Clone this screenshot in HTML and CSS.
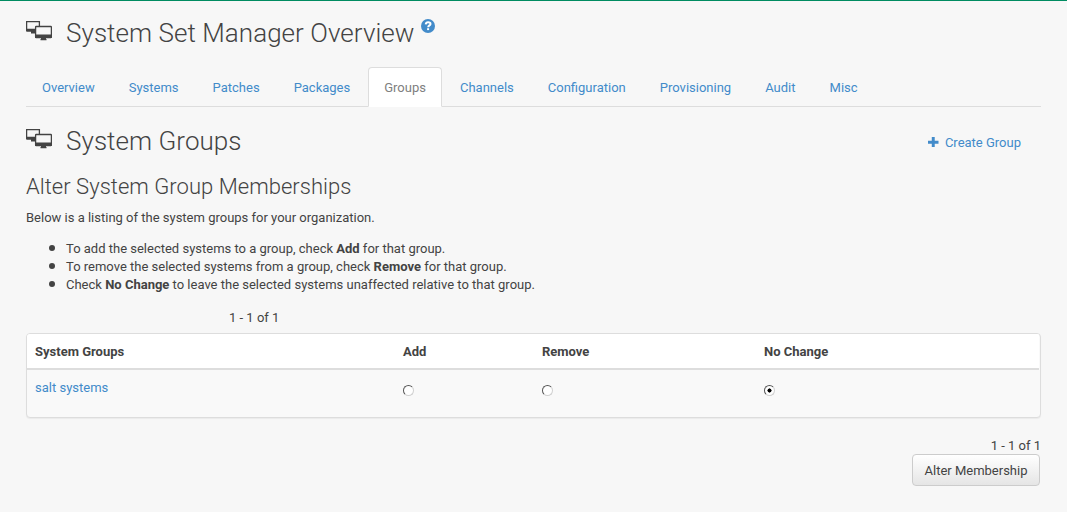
FILE: index.html
```html
<!DOCTYPE html>
<html lang="en">
<head>
<meta charset="utf-8">
<title>System Set Manager Overview</title>
<link rel="stylesheet" href="styles.css">
</head>
<body>
<svg class="defs" width="0" height="0">
  <symbol id="systems" viewBox="0 0 26 20">
    <path d="M.6 8V.600h12.800V5" fill="none" stroke="currentColor" stroke-width="1.300"/>
    <path d="M0 7.800h9v3H1q-1 0-1-1zM5 10.500h4v2H5z" fill="currentColor"/>
    <rect x="9.600" y="5.500" width="15.800" height="11" rx=".6" fill="none" stroke="currentColor" stroke-width="1.300"/>
    <path d="M9 13.500h17v2.700q0 .8-.8.8H9.800q-.8 0-.8-.8zM15 17h5v1h.5v1.300h-6V18h.5z" fill="currentColor"/>
  </symbol>
</svg>
<main class="page">
  <h1 class="title">
    <svg class="systems-icon"><use href="#systems"/></svg>
    <span class="title-text">System Set Manager Overview</span>
    <svg class="help-icon" viewBox="0 0 14 14"><circle cx="7" cy="7" r="7" fill="currentColor"/><path d="M4.700 5.300C4.900 3.800 5.800 3.200 7.100 3.200c1.400 0 2.400.7 2.400 1.800 0 1.400-2.300 1.400-2.300 3.200" fill="none" stroke="#fff" stroke-width="2"/><path d="M6.100 9.200h2v1.900h-2z" fill="#fff"/></svg>
  </h1>
  <nav class="tabs">
    <a class="tab">Overview</a><a class="tab">Systems</a><a class="tab">Patches</a><a class="tab">Packages</a><a class="tab active">Groups</a><a class="tab">Channels</a><a class="tab">Configuration</a><a class="tab">Provisioning</a><a class="tab">Audit</a><a class="tab">Misc</a>
  </nav>
  <div class="section-head">
    <h2 class="title">
      <svg class="systems-icon"><use href="#systems"/></svg>
      <span class="title-text">System Groups</span>
    </h2>
    <a class="create"><svg class="plus" viewBox="0 0 10 10"><path d="M5 0v10M0 5h10" stroke="currentColor" stroke-width="2.800"/></svg>Create Group</a>
  </div>
  <h3 class="subtitle">Alter System Group Memberships</h3>
  <p class="intro">Below is a listing of the system groups for your organization.</p>
  <ul class="notes">
    <li>To add the selected systems to a group, check <b>Add</b> for that group.</li>
    <li>To remove the selected systems from a group, check <b>Remove</b> for that group.</li>
    <li>Check <b>No Change</b> to leave the selected systems unaffected relative to that group.</li>
  </ul>
  <div class="count-top">1 - 1 of 1</div>
  <div class="panel">
    <div class="row head"><span>System Groups</span><span>Add</span><span>Remove</span><span>No Change</span></div>
    <div class="row body"><a>salt systems</a><i class="radio"></i><i class="radio"></i><i class="radio checked"></i></div>
  </div>
  <div class="count-bottom">1 - 1 of 1</div>
  <div class="actions"><button class="button">Alter Membership</button></div>
</main>
</body>
</html>
```
FILE: styles.css
```css
* { box-sizing: border-box; }
body {
  margin: 0;
  height: 512px;
  overflow: hidden;
  border-top: 1px solid #008c61;
  background: #f7f7f7;
  color: #434343;
  font: 13px/18px Roboto, sans-serif;
}
.defs { display: block; }
.page { padding: 18px 26px 0; }
.title {
  display: flex;
  margin: 0;
  height: 28px;
  font-size: 26px;
  font-weight: 300;
  line-height: 28px;
  letter-spacing: .05px;
  white-space: nowrap;
}
.systems-icon { width: 26px; height: 20px; margin: 2px 14px 0 0; }
.help-icon { width: 14px; height: 14px; margin: 0 0 0 6.500px; color: #428bca; }
.tabs {
  display: flex;
  gap: 2.030px;
  height: 40px;
  margin-top: 20px;
  border-bottom: 1px solid #ddd;
}
.tab {
  height: 40px;
  padding: 11px 15px;
  border: 1px solid transparent;
  border-radius: 4px 4px 0 0;
  color: #428bca;
}
.tab.active {
  background: #fff;
  border-color: #ddd #ddd #fff;
  color: #808080;
}
.section-head { display: flex; justify-content: space-between; margin-top: 20px; }
.create {
  display: flex;
  padding: 7px 20px 0 0;
  color: #428bca;
}
.plus { width: 10.500px; height: 10.500px; margin: 2.500px 6px 0 0; }
.subtitle { margin: 20px 0 0; font-size: 22px; font-weight: 300; line-height: 24px; letter-spacing: .03px; }
.intro { margin: 10px 0 0; }
.notes { margin: 13px 0 0; padding-left: 40px; list-style: none; }
.notes li::before {
  content: "";
  display: inline-block;
  width: 6px;
  height: 6px;
  margin: 0 11px 2px -17px;
  border-radius: 50%;
  background: #434343;
}
.count-top { margin: 15px 0 0 203px; }
.panel {
  height: 85px;
  margin: 6px 0 0;
  border: 1px solid #ddd;
  border-radius: 4px;
  background: #f9f9f9;
  box-shadow: 0 1px 1px rgba(0, 0, 0, .05);
  overflow: hidden;
}
.row {
  display: grid;
  grid-template-columns: 368px 139px 222px 1fr;
  padding-left: 8px;
  margin-right: 1px;
}
.head { height: 36px; padding-top: 9px; border-bottom: 2px solid #ddd; background: #fff; font-weight: 700; }
.body { padding-top: 9px; }
.body a { color: #428bca; }
.radio {
  width: 11px;
  height: 11px;
  margin-top: 6px;
  border: 1px solid;
  border-color: #555 #d0d0d0 #d0d0d0 #555;
  border-radius: 50%;
  background: #fff;
}
.checked { background: radial-gradient(circle at center, #000 1.800px, #fff 2.300px); }
.count-bottom { margin-top: 19px; text-align: right; }
.actions { display: flex; justify-content: flex-end; padding-right: 1px; margin-top: -1px; }
.button {
  width: 128px;
  height: 32px;
  padding: 1px 0 0;
  border: 1px solid #ccc;
  border-radius: 4px;
  background: linear-gradient(#fff, #e5e5e5);
  color: #434343;
  font: 13px/18px Roboto, sans-serif;
}
```
